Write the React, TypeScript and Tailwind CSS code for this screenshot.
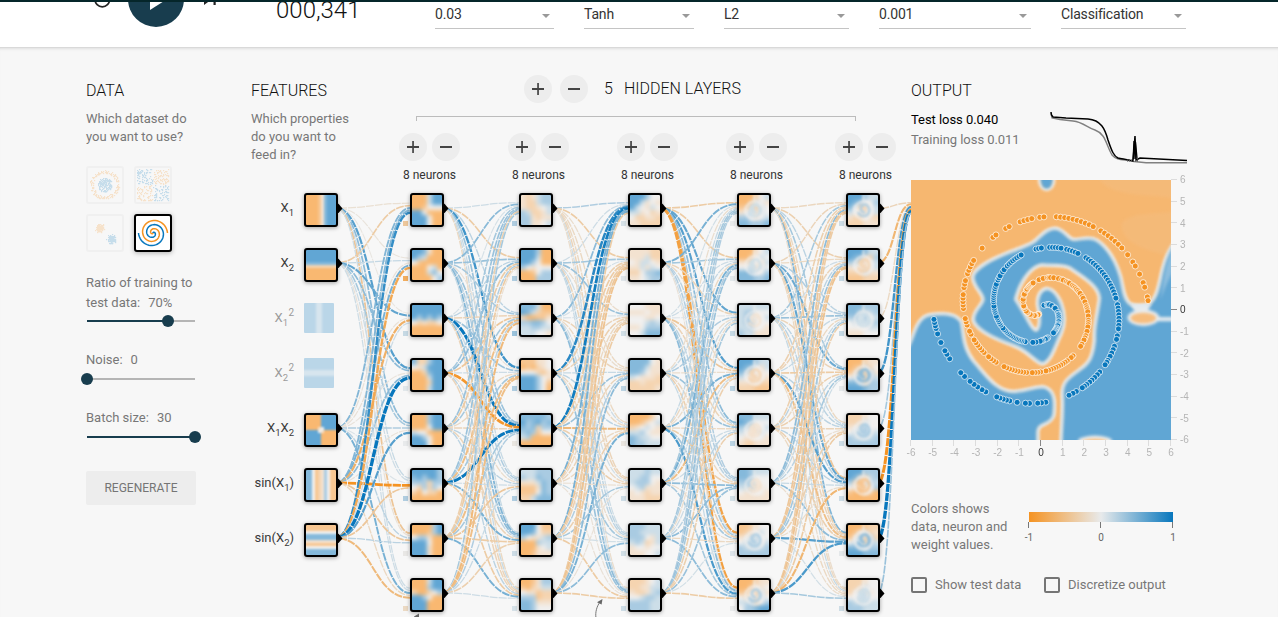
import React from "react";

type RGB = [number, number, number];

const mix = (a: RGB, b: RGB, t: number) =>
  `rgb(${a.map((v, i) => Math.round(v + (b[i] - v) * t)).join(",")})`;

const weightColor = (w: number) => {
  const c = Math.max(-1, Math.min(1, w));
  return c < 0 ? mix([232, 234, 235], [245, 147, 34], -c) : mix([232, 234, 235], [8, 119, 189], c);
};

const cellColor = (d: number) =>
  d < 4
    ? mix([249, 184, 113], [241, 240, 239], d / 4)
    : mix([241, 240, 239], [97, 166, 212], (d - 4) / 4);

const CELL_TOP = 193;
const ROW = 55;
const LAYER_X = [410, 519, 628, 737, 846];

const FEATURES = [
  { name: "X", sub: "1", sup: "", pre: "", post: "", row: 0, active: true, grid: Array(10).fill("0000137888") },
  { name: "X", sub: "2", sup: "", pre: "", post: "", row: 1, active: true, grid: ["8", "8", "8", "8", "7", "2", "0", "0", "0", "0"].map((c) => c.repeat(10)) },
  { name: "X", sub: "1", sup: "2", pre: "", post: "", row: 2, active: false, grid: Array(10).fill("8888668888") },
  { name: "X", sub: "2", sup: "2", pre: "", post: "", row: 3, active: false, grid: ["8", "8", "8", "8", "6", "6", "8", "8", "8", "8"].map((c) => c.repeat(10)) },
  { name: "X", sub: "1", sup: "", pre: "", post: "X2", row: 4, active: true, grid: ["0000088888", "0000088888", "0000088888", "0000088888", "0000348888", "8888430000", "8888800000", "8888800000", "8888800000", "8888800000"] },
  { name: "X", sub: "1", sup: "", pre: "sin(", post: ")", row: 5, active: true, grid: Array(10).fill("7741236411") },
  { name: "X", sub: "2", sup: "", pre: "sin(", post: ")", row: 6, active: true, grid: ["1", "1", "4", "7", "7", "3", "1", "4", "7", "7"].map((c) => c.repeat(10)) },
];

const NEURONS: string[][] = [
  [
    "000588 000588 001444 884000 888400 888400",
    "887300 865000 410000 000450 000574 000046",
    "888888 888888 868686 423224 000000 000000",
    "722688 435888 002788 000588 000288 000588",
    "000688 000688 000488 544000 886400 888400",
    "888886 786886 666266 426264 204220 000000",
    "000068 000168 466300 888400 888300 888300",
    "000588 000688 200246 886400 888000 888000",
  ],
  [
    "323566 322566 322345 652235 663233 663345",
    "888600 888500 886400 643444 001466 000666",
    "777500 875211 200113 667764 556655 555443",
    "111334 010234 444213 888643 888641 888640",
    "777776 867867 767266 676144 560000 000000",
    "555666 655766 333576 111376 111476 225777",
    "888411 887422 643356 000655 000345 001333",
    "001366 102355 433122 666122 776333 776444",
  ],
  [
    "888644 885343 854354 553423 422332 332222",
    "333322 333522 435543 335354 224667 334566",
    "444333 333433 444334 444565 334666 445777",
    "777743 777533 776433 543332 223222 222223",
    "000024 001345 234543 556433 765544 766555",
    "555655 556644 566643 456333 343233 333222",
    "666555 665555 666435 565235 344344 333445",
    "222345 223355 322356 445665 666655 666655",
  ],
  [
    "000245 002543 125254 345354 664345 776667",
    "000345 002454 335435 445354 776446 777667",
    "555555 566444 564345 566444 556443 655333",
    "888655 876435 752434 543243 332422 222111",
    "777555 876444 653345 543354 433443 322333",
    "776555 776444 665344 556334 433443 333333",
    "112344 123454 345544 455545 655556 666666",
    "000233 002434 124253 434354 556246 466788",
  ],
  [
    "888655 876446 742245 544345 322432 222333",
    "888755 876326 652345 344245 222533 111222",
    "777666 775556 664645 455556 444455 333444",
    "000233 012524 137263 456265 775266 888766",
    "222344 223544 345644 455655 655556 666666",
    "888666 873256 620365 432246 100320 000000",
    "000122 014523 146262 455265 775466 888777",
    "222344 223544 245534 445544 655555 666555",
  ],
];

/* Tint of the faint swirl in the deeper layers, by layer and unit. */
const SWIRLS: Record<number, number[]> = {
  3: [5, 5, 3, 2, 3, 3, 6, 6],
  4: [6, 2, 5, 7, 6, 1, 7, 5],
};

const BIASES = [
  [-0.4, -0.7, 0.15, 0.03, 0, 0.25, -0.03, -0.2],
  [0.25, 0.25, 0.35, 0.25, -0.05, 0.25, 0.12, 0.08],
  [0.08, 0.04, 0.1, 0.2, -0.06, 0.12, 0.1, 0.12],
  [0, 0.03, 0.15, 0.2, 0.2, 0.1, 0.05, 0],
  [0.12, 0.15, 0.15, 0.02, 0.12, 0.12, 0.02, 0.12],
];

const SOURCE_ROWS = [0, 1, 4, 5, 6];

/* One row per source unit, one column per target unit. */
const WEIGHTS: number[][][] = [
  [
    [-0.12, -0.08, -0.05, 0.65, 0.4, 0.15, -0.42, 0.12],
    [-0.35, 0.16, 0.6, 0.4, 0.3, 0.12, -0.1, 0.12],
    [0.45, -0.1, -0.1, -0.08, 0.25, 0.06, 0.2, 0.5],
    [0.45, 0.5, -0.65, 0.4, -0.1, -1.0, -0.4, -0.2],
    [0.8, -0.75, 0.12, 1.3, 0.65, -0.4, 0.2, -0.55],
  ],
  [
    [0.12, -0.35, 0.2, 0.75, 0.35, 0.15, 0.15, -0.2],
    [0.42, 0.35, 0.3, -0.1, 0.35, 0.25, 0.45, 0.15],
    [0.08, 0.2, -0.25, 0.35, 1.15, 0.15, 0.4, -0.25],
    [0.3, 0.4, -0.4, 0.12, -0.95, -0.15, 0.2, -0.25],
    [0.35, -0.35, 0.3, -0.2, -0.25, 0.2, -0.25, 0.2],
    [0.35, 0.25, -0.5, 0.3, 1.1, 0.12, 0.5, -0.35],
    [-0.3, -0.35, 0.2, -0.5, 0.3, -0.4, -0.35, 0.5],
    [0.3, -0.12, -0.55, -0.5, 0.25, 0.15, -0.3, 0.12],
  ],
  [
    [0.25, -0.35, -0.15, -0.2, -0.2, -0.25, 0.12, -0.15],
    [0.12, 0.3, 0.35, -0.15, 0.12, -0.25, 0.2, 0.15],
    [0.4, 0.1, 0.08, -0.25, -0.2, 0.1, 0.2, 0.4],
    [0.85, -0.3, -0.25, 0.15, 0.2, -0.2, -0.15, 0.35],
    [0.95, -0.35, -0.3, 0.35, -0.55, -0.3, 0.3, -0.1],
    [0.5, -0.35, -0.2, -0.25, -0.2, -0.12, 0.15, -0.1],
    [0.5, -0.4, -0.3, 0.25, -0.3, 0.3, 0.1, -0.35],
    [-0.35, -0.45, -0.35, 0.4, 0.5, -0.1, 0.4, -0.35],
  ],
  [
    [-0.35, -0.35, 0.6, 0.65, 0.4, 0.25, -0.8, -0.85],
    [0.5, 0.3, -0.25, -0.2, 0.2, 0.25, 0.12, -0.1],
    [0.1, 0.12, 0.05, -0.4, -0.25, 0.2, 0.3, 0.4],
    [-0.15, 0.15, 0.25, -0.15, 0.35, -0.2, -0.3, 0.15],
    [0.15, -0.2, -0.15, 0.5, -0.2, -0.3, 0.3, 0.7],
    [0.3, 0.5, 0.15, -0.5, 0.12, 0.4, -0.15, 0.3],
    [0.3, 0.25, -0.15, 0.12, 0.2, 0.4, -0.2, 0.4],
    [0.25, 0.35, 0.3, -0.3, -0.3, 0.35, 0.1, -0.35],
  ],
  [
    [-0.22, -0.3, 0.2, 0.3, -0.2, -0.4, 0.45, -0.15],
    [-0.25, -0.2, 0.25, 0.55, 0.15, 0.6, -0.3, -0.2],
    [0.3, 0.12, 0.35, -0.25, 0.2, 0.2, -0.25, 0.15],
    [-0.3, -0.25, 0.15, -0.35, 0.2, 0.65, -0.5, -0.15],
    [-0.3, 0.2, -0.2, -0.3, -0.25, 0.2, -0.3, -0.2],
    [0.4, 0.35, 0.15, 0.2, -0.12, 0.15, 0.4, -0.15],
    [-0.4, -0.4, 0.3, 0.3, -0.3, -0.15, 0.65, 0.1],
    [-0.35, -0.45, -0.3, 0.12, -0.35, -0.6, 0.7, 0.3],
  ],
  [[-0.25], [-0.6], [-0.2], [0.75], [0.3], [-1.1], [1.3], [0.35]],
];

const rowY = (row: number) => CELL_TOP + 15 + ROW * row;

function Links() {
  const out: React.ReactElement[] = [];
  WEIGHTS.forEach((layer, l) => {
    const n = layer.length;
    const sx = (l === 0 ? 304 : LAYER_X[l - 1]) + 32;
    const tx = l === 5 ? 911 : LAYER_X[l];
    layer.forEach((targets, s) => {
      const sy = rowY(l === 0 ? SOURCE_ROWS[s] : s);
      targets.forEach((w, t) => {
        const ty = rowY(t) + ((s - (n - 1) / 2) / n) * 12;
        const mx = (sx + tx) / 2;
        out.push(
          <path
            key={`${l}-${s}-${t}`}
            d={`M${sx},${sy}C${mx},${sy} ${mx},${ty} ${tx},${ty}`}
            stroke={weightColor(w)}
            strokeWidth={1 + Math.abs(w) * 1.8}
            strokeDasharray="8 1"
            strokeDashoffset={-3}
          />,
        );
      });
    });
  });
  return <g fill="none">{out}</g>;
}

function Heat({ rows, swirl }: { rows: string[]; swirl?: number }) {
  const n = rows.length;
  const c = 30 / n;
  return (
    <g clipPath="url(#tile)">
      <g filter={n > 6 ? "url(#fine)" : "url(#soft)"}>
        {rows.map((r, y) =>
          r.split("").map((d, x) => {
            const x0 = x === 0 ? -8 : x * c;
            const y0 = y === 0 ? -8 : y * c;
            const x1 = x === n - 1 ? 38 : (x + 1) * c;
            const y1 = y === n - 1 ? 38 : (y + 1) * c;
            return <rect key={`${x}-${y}`} x={x0} y={y0} width={x1 - x0 + 0.2} height={y1 - y0 + 0.2} fill={cellColor(Number(d))} />;
          }),
        )}
      </g>
      {swirl !== undefined && (
        <g filter="url(#fine)" fill="none">
          <path d="M15.500,0V6" stroke="#f1f0ef" strokeWidth="2.500" opacity="0.6" />
          <circle cx="15.500" cy="15.500" r="9" stroke="#f1f0ef" strokeWidth="2.500" opacity="0.6" />
          <path d="M17,17C13,18 11,12 15,10C20,8 23,15 20,19C18,22 12,22 10,17" stroke={cellColor(swirl)} strokeWidth="2.500" opacity="0.85" />
        </g>
      )}
    </g>
  );
}

function Tile({ x, y, rows, swirl }: { x: number; y: number; rows: string[]; swirl?: number }) {
  return (
    <g transform={`translate(${x},${y})`}>
      <rect x="0" y="1" width="34" height="34" rx="3" fill="#000" opacity="0.35" filter="url(#shade)" />
      <rect width="34" height="34" rx="3" fill="#000" />
      <g transform="translate(2,2)">
        <Heat rows={rows} swirl={swirl} />
      </g>
      <path d="M33.5,10.8h1l4,4.6-4,4.6h-1z" fill="#000" />
    </g>
  );
}

function FeatureLabel({ f }: { f: (typeof FEATURES)[number] }) {
  const y = rowY(f.row) + 3.5;
  return (
    <text x={f.sup ? 288 : 294} y={y} textAnchor="end" fontSize="13" fill={f.active ? "#3a3a3a" : "#9b9b9b"}>
      {f.pre}X
      <tspan fontSize="9.5" dy="4">{f.sub}</tspan>
      {f.post === "X2" && (
        <>
          <tspan dy="-4">X</tspan>
          <tspan fontSize="9.5" dy="4">2</tspan>
        </>
      )}
      {f.post === ")" && <tspan dy="-4">)</tspan>}
    </text>
  );
}

function NetworkDiagram() {
  return (
    <svg className="absolute left-0 top-[185px] h-[432px] w-[660px] font-[Roboto,sans-serif]" viewBox="251 185 660 432">
      <defs>
        <clipPath id="tile">
          <rect width="30" height="30" rx="1" />
        </clipPath>
        <filter id="soft" x="-20%" y="-20%" width="140%" height="140%" colorInterpolationFilters="sRGB">
          <feGaussianBlur stdDeviation="2" />
        </filter>
        <filter id="fine" x="-20%" y="-20%" width="140%" height="140%" colorInterpolationFilters="sRGB">
          <feGaussianBlur stdDeviation="0.9" />
        </filter>
        <filter id="shade" x="-30%" y="-30%" width="160%" height="160%">
          <feGaussianBlur stdDeviation="2" />
        </filter>
      </defs>
      <Links />
      {FEATURES.map((f) => (
        <g key={f.row}>
          <FeatureLabel f={f} />
          {f.sup && <text x="294" y={rowY(f.row) - 2} textAnchor="end" fontSize="10" fill="#9b9b9b">{f.sup}</text>}
          {f.active ? (
            <Tile x={304} y={CELL_TOP + ROW * f.row} rows={f.grid} />
          ) : (
            <g transform={`translate(304,${CELL_TOP + ROW * f.row})`} opacity="0.4">
              <Heat rows={f.grid} />
            </g>
          )}
        </g>
      ))}
      {NEURONS.map((layer, l) =>
        layer.map((g, i) => (
          <g key={`${l}-${i}`}>
            <rect x={LAYER_X[l] - 7} y={CELL_TOP + ROW * i + 28} width="5" height="5" fill={weightColor(BIASES[l][i])} />
            <Tile x={LAYER_X[l]} y={CELL_TOP + ROW * i} rows={g.split(" ")} swirl={SWIRLS[l]?.[i]} />
          </g>
        )),
      )}
      <path d="M596,618C595,612 597,606 600,602" fill="none" stroke="#777" />
      <path d="M602.5,599l-5.5,3.2 4.6,2.2z" fill="#666" />
      <path d="M419,613.5l-5,3 1,1.5h4z" fill="#666" />
    </svg>
  );
}

function RoundButton({ kind }: { kind: "+" | "-" }) {
  return (
    <button className="flex size-7 items-center justify-center rounded-full bg-[#ededed]">
      <svg className="size-3" viewBox="0 0 12 12" fill="#444">
        <rect x="0" y="5" width="12" height="2" />
        {kind === "+" && <rect x="5.2" y="0" width="1.7" height="12" />}
      </svg>
    </button>
  );
}

function Select({ value, className }: { value: string; className: string }) {
  return (
    <div className={`flex h-[29px] items-center justify-between border-b border-[#c4c4c4] pr-[4px] text-[14px] leading-[28px] tracking-[-0.18px] text-[#333] ${className}`}>
      <span>{value}</span>
      <span className="mt-[3px] size-0 border-x-[4px] border-t-[4px] border-x-transparent border-t-[#999]" />
    </div>
  );
}

function Header() {
  return (
    <header className="relative z-10 h-[47px] overflow-hidden border-t-2 border-[#05262a] bg-white">
      <div className="-mt-[2px] flex h-[29px]">
        <div className="flex w-[276px] shrink-0">
          <svg className="h-[29px] w-[276px]" viewBox="0 0 276 29">
            <path d="M95,-0.500a7.3,7.3 0 0 0 14.6,0" fill="none" stroke="#222" strokeWidth="1.7" />
            <circle cx="156" cy="-1" r="28" fill="#183d4e" />
            <path d="M150,-11v21l16.500,-10.500z" fill="#fff" />
            <path d="M204,-6v11l7.500,-5.500z M213.500,-6h2.200v11h-2.200z" fill="#222" />
          </svg>
        </div>
        <div className="-mt-[4px] w-[159px] shrink-0 text-[24px] font-light leading-[29px] text-[#111]">000,341</div>
        <Select value="0.03" className="w-[119px]" />
        <Select value="Tanh" className="ml-[30px] w-[110px]" />
        <Select value="L2" className="ml-[30px] w-[125px]" />
        <Select value="0.001" className="ml-[30px] w-[152px]" />
        <Select value="Classification" className="ml-[30px] w-[125px]" />
      </div>
    </header>
  );
}

const rand = (seed: number) => {
  const v = Math.sin(seed * 127.1 + 3.7) * 43758.5453;
  return v - Math.floor(v);
};

function scatter(kind: "circle" | "xor" | "gauss") {
  const pts: { x: number; y: number; blue: boolean }[] = [];
  for (let i = 0; i < 320; i++) {
    const a = rand(i) * Math.PI * 2;
    const b = rand(i + 500);
    const c = rand(i + 900);
    if (kind === "circle") {
      const blue = i % 2 === 0;
      const r = blue ? 7 * Math.sqrt(b) : 11.5 + 3 * b;
      pts.push({ x: 17 + r * Math.cos(a), y: 17 + r * Math.sin(a), blue });
    } else if (kind === "xor") {
      const x = b * 30 - 15;
      const y = c * 30 - 15;
      pts.push({ x: 17 + x + Math.sign(x) * 0.8, y: 17 + y + Math.sign(y) * 0.8, blue: x * y > 0 });
    } else {
      const blue = i % 2 === 0;
      const r = 5.5 * b * Math.sqrt(c);
      pts.push({ x: (blue ? 23.5 : 12) + r * Math.cos(a), y: (blue ? 23.5 : 12) + r * Math.sin(a), blue });
    }
  }
  return pts;
}

function spiral(dir: number) {
  let d = "";
  for (let i = 0; i <= 80; i++) {
    const u = i / 80;
    const t = 3.5 * Math.PI * u;
    d += `${i ? "L" : "M"}${(17 + dir * 14.5 * u * Math.sin(t)).toFixed(2)},${(17 - dir * 14.5 * u * Math.cos(t)).toFixed(2)}`;
  }
  return d;
}

function Dataset({ kind }: { kind: "circle" | "xor" | "gauss" | "spiral" }) {
  if (kind === "spiral") {
    return (
      <div className="size-[38px] rounded-[3px] border-2 border-black bg-white shadow-[0_1px_5px_rgba(0,0,0,0.3)]">
        <svg className="size-[34px]" viewBox="0 0 34 34" fill="none" strokeWidth="1.5">
          <path d={spiral(1)} stroke="#0877bd" />
          <path d={spiral(-1)} stroke="#f59322" />
        </svg>
      </div>
    );
  }
  return (
    <div className="size-[38px] rounded-[3px] border-2 border-[#f0f0f0]">
      <svg className="size-[34px] opacity-20" viewBox="0 0 34 34">
        {scatter(kind).map((p, i) => (
          <rect key={i} x={Math.round(p.x - 0.5)} y={Math.round(p.y - 0.5)} width="1.2" height="1.2" fill={p.blue ? "#0877bd" : "#f59322"} />
        ))}
      </svg>
    </div>
  );
}

function Slider({ value }: { value: number }) {
  return (
    <svg className="-ml-[6px] block h-3 w-[122px]" viewBox="0 0 122 12">
      <rect x="7" y="5" width="108" height="2" fill="#b5b5b5" />
      <rect x="7" y="5" width={108 * value} height="2" fill="#183d4e" />
      <circle cx={7 + 108 * value} cy="6" r="6" fill="#183d4e" />
    </svg>
  );
}

function DataColumn() {
  return (
    <section className="ml-[86px] w-[110px] shrink-0 pt-[33px] text-[13px] text-[#777]">
      <h4 className="text-[16px] font-light leading-[20px] text-[#111]">DATA</h4>
      <p className="mt-[9px] whitespace-nowrap leading-[18px]">Which dataset do<br />you want to use?</p>
      <div className="mt-[20px] grid w-[86px] grid-cols-2 gap-[10px]">
        <Dataset kind="circle" />
        <Dataset kind="xor" />
        <Dataset kind="gauss" />
        <Dataset kind="spiral" />
      </div>
      <div className="mt-[21px] whitespace-nowrap leading-[20px]">Ratio of training to<br />test data:<span className="ml-2">70%</span></div>
      <div className="mt-[2px]"><Slider value={0.75} /></div>
      <div className="mt-[23px] leading-[20px]">Noise:<span className="ml-2">0</span></div>
      <div className="mt-[3px]"><Slider value={0} /></div>
      <div className="mt-[23px] leading-[20px]">Batch size:<span className="ml-2">30</span></div>
      <div className="mt-[3px]"><Slider value={1} /></div>
      <button className="mt-[28px] h-[34px] w-[110px] rounded-[2px] bg-[#ededed] text-[12px] text-[#757575]">REGENERATE</button>
    </section>
  );
}

function NetworkColumn() {
  return (
    <section className="relative ml-[55px] -mt-[48px] h-[617px] w-[660px] shrink-0">
      <div className="flex pt-[75px]">
        <div className="w-[149px] shrink-0 pt-[6px]">
          <h4 className="text-[16px] font-light leading-[20px] text-[#111]">FEATURES</h4>
          <p className="mt-[9px] text-[13px] leading-[18px] text-[#777]">Which properties<br />do you want to<br />feed in?</p>
        </div>
        <div className="flex w-[496px] shrink-0 flex-col">
          <div className="ml-[124px] flex h-7 items-center gap-2">
            <RoundButton kind="+" />
            <RoundButton kind="-" />
            <span className="ml-2 text-[16px] font-light text-[#111]">5</span>
            <span className="ml-[3px] text-[16px] font-light text-[#111]">HIDDEN LAYERS</span>
          </div>
          <div className="ml-[16px] mt-[13px] h-[5px] w-[440px] border border-b-0 border-[#bcbcbc]" />
          <div className="-ml-[1px] mt-[12px] flex">
            {LAYER_X.map((x) => (
              <div key={x} className="w-[109px] shrink-0">
                <div className="flex gap-[5px]">
                  <RoundButton kind="+" />
                  <RoundButton kind="-" />
                </div>
                <div className="mt-[5px] w-[61px] whitespace-nowrap text-center text-[12px] leading-[18px] text-[#333]">8 neurons</div>
              </div>
            ))}
          </div>
        </div>
      </div>
      <NetworkDiagram />
    </section>
  );
}

const inside = (v: number, gaps: number[][]) => gaps.some(([a, b]) => v > a && v < b);

const ORANGE_GAPS = [[314, 324], [393.5, 400], [488.8, 496], [498.8, 506], [511.5, 516], [519.5, 526.3], [534.7, 538.7], [542, 549], [572.5, 577]];
const BLUE_GAPS = [[342.5, 351.8], [361.5, 366.8]];
const ORANGE_END = [592.5, 597.5, 602.4, 605, 610, 615, 617.6, 623, 625];
const BLUE_END = [
  487, 488.5, 490.5, 496.6, 499, 501.5, 504, 506, 508.5, 510.3, 512, 516.6, 519, 521.8, 537, 539.7, 542, 547, 549.5,
  554.5, 559, 561, 563, 565, 567, 574, 576.5, 579.5, 582, 584.8, 589, 592, 601.9, 604.8, 607, 612, 617, 620, 621.5, 623.3, 625,
];

const dropRate = (t: number) => (t < 100 ? 0.7 : t < 200 ? 0.5 : t < 300 ? 0.3 : t < 480 ? 0.18 : 0);

function Dots() {
  const dots: { x: number; y: number; c: string; k: string }[] = [];
  const add = (t: number, dir: number) => {
    const r = (5 * t) / 630;
    const a = (t * Math.PI) / 180;
    dots.push({
      x: 130 + dir * r * Math.sin(a) * 21.667,
      y: 130 - dir * r * Math.cos(a) * 21.667,
      c: dir > 0 ? "#0877bd" : "#f59322",
      k: `${dir}-${t}`,
    });
  };
  for (let i = 8; i < 250; i++) {
    const t = i * 2.52;
    if (t < 591 && rand(i) > dropRate(t) && !inside(t, ORANGE_GAPS)) add(t, -1);
    if (t < 486 && rand(i + 300) > dropRate(t) && !inside(t, BLUE_GAPS)) add(t, 1);
  }
  ORANGE_END.forEach((t) => add(t, -1));
  BLUE_END.forEach((t) => add(t, 1));
  return (
    <g stroke="#fff" strokeOpacity="0.7" strokeWidth="1">
      {dots.map((d) => (
        <circle key={d.k} cx={d.x} cy={d.y} r="3" fill={d.c} />
      ))}
    </g>
  );
}

const MAIN_REGION =
  "M840,200C805,240 795,270 785,315C775,365 768,385 750,402C730,412 705,412 688,402C668,385 668,350 660,320C648,280 625,235 590,212C565,198 540,212 520,210C505,208 490,178 465,176C435,178 420,205 400,218C370,235 330,245 300,260C265,275 222,300 220,322C222,350 250,370 251,388C250,405 218,425 222,452C235,485 300,510 340,525C385,540 405,575 427,580C452,575 465,525 482,490C495,460 493,430 482,400C470,372 455,358 440,357C418,362 414,385 414,402C420,430 425,470 410,482C395,485 380,440 345,388C355,345 385,290 425,283C455,287 480,280 510,292C545,318 598,345 600,385C595,430 582,470 585,510C580,560 570,580 540,600C515,620 490,630 488,670C492,720 485,770 484,840L840,840Z";
const LEFT_REGION =
  "M10,545C45,530 38,445 90,436C125,430 165,430 182,455C190,490 185,530 220,575C260,620 290,668 345,666C385,662 405,652 430,652C470,662 462,710 460,735C450,768 413,755 412,785L412,840L10,840Z";

function OutputPlot() {
  const ticks = Array.from({ length: 13 }, (_, i) => i - 6);
  return (
    <svg className="absolute left-0 top-[170px] h-[295px] w-[290px] font-['Liberation_Sans',sans-serif]" viewBox="-10 -10 290 295">
      <defs>
        <clipPath id="plot"><rect width="260" height="260" /></clipPath>
        <filter id="edge" x="-5%" y="-5%" width="110%" height="110%" colorInterpolationFilters="sRGB"><feGaussianBlur stdDeviation="5.5" /></filter>
        <filter id="core" x="-5%" y="-5%" width="110%" height="110%" colorInterpolationFilters="sRGB"><feGaussianBlur stdDeviation="4" /></filter>
      </defs>
      <g clipPath="url(#plot)">
        <rect width="260" height="260" fill="#f6b770" />
        <g transform="scale(0.33333) translate(-33,-30)">
          <path d="M600,30C640,90 800,70 840,90V20H600ZM665,160C700,110 840,150 840,100V260C750,250 660,220 665,160Z" fill="#f3bd81" opacity="0.5" filter="url(#core)" />
          <g stroke="#f4f2ef" strokeWidth="12" fill="none" filter="url(#edge)">
            <path d={MAIN_REGION} />
            <path d={LEFT_REGION} />
            <ellipse cx="440" cy="30" rx="20" ry="27" />
          </g>
          <g fill="#60a6d4" filter="url(#core)">
            <path d={MAIN_REGION} />
            <path d={LEFT_REGION} />
            <ellipse cx="440" cy="30" rx="18" ry="26" />
          </g>
          <g fill="none" stroke="#f4f2ef" strokeWidth="6" opacity="0.75" filter="url(#core)">
            <path d={MAIN_REGION} />
            <path d={LEFT_REGION} />
          </g>
          <g filter="url(#edge)">
            <path d="M690,402H755L740,425H705ZM760,441H830V454H760Z" fill="#e4eaee" />
            <path d="M822,225C795,280 790,330 782,390C795,350 810,320 822,300Z" fill="#9fc8e2" opacity="0.7" />
            <ellipse cx="730" cy="443" rx="48" ry="25" fill="#e9ecee" />
            <ellipse cx="585" cy="814" rx="52" ry="17" fill="#f1efec" />
          </g>
          <g fill="#f6bd7e" filter="url(#core)">
            <ellipse cx="730" cy="444" rx="38" ry="16" />
            <ellipse cx="585" cy="816" rx="38" ry="10" />
          </g>
        </g>
        <Dots />
      </g>
      {ticks.map((v) => {
        const p = 130 + v * 21.667;
        const fill = v === 0 ? "#333" : "#b5b5b5";
        const line = v === 0 ? "#888" : "#dcdcdc";
        return (
          <g key={v} fontSize="10" fill={fill}>
            <path d={`M${Math.round(p) - 0.5},260v6M260,${Math.round(260 - p) - 0.5}h6`} stroke={line} />
            <text x={p} y="276" textAnchor="middle">{v}</text>
            <text x="269" y={260 - p + 3.3}>{v}</text>
          </g>
        );
      })}
    </svg>
  );
}

function LossChart() {
  return (
    <svg className="absolute left-[149px] top-[108px] h-[60px] w-[140px]" viewBox="1050 108 140 60" fill="none">
      <path d="M1051,113L1052,118L1060,119.5L1073,121C1083,122 1088,128 1095,130C1106,134 1106,145 1112,155C1117,161 1124,159 1134,161.5L1146,162.7H1187" stroke="#808080" strokeWidth="1.4" />
      <path d="M1051,112L1051.5,115L1053,117L1066,118L1088,119C1101,120 1105,129 1108,140C1112,152 1114,156 1118,158C1123,159 1130,160 1133,161L1135,136L1136,160L1140,158L1187,160.5" stroke="#000" strokeWidth="1.5" />
      <path d="M1133,161L1134,141L1135,159L1135.5,142L1137,158" stroke="#000" strokeWidth="1.3" />
      <path d="M1127,160.5h12" stroke="#555" strokeWidth="2" strokeDasharray="1 1" />
    </svg>
  );
}

function Check({ label, className }: { label: string; className: string }) {
  return (
    <label className={`flex items-center gap-2 whitespace-nowrap ${className}`}>
      <span className="size-4 rounded-[2px] border-2 border-[#757575]" />
      {label}
    </label>
  );
}

function OutputColumn() {
  return (
    <section className="relative -mt-[48px] h-[617px] w-[290px] shrink-0 pt-[81px] text-[13px] text-[#777]">
      <h4 className="text-[16px] font-light leading-[20px] text-[#111]">OUTPUT</h4>
      <div className="mt-[9px] leading-[20px] tracking-[-0.05px]">
        <div className="text-black">Test loss 0.040</div>
        <div>Training loss 0.011</div>
      </div>
      <div className="absolute left-[-10px] top-0"><LossChart /><OutputPlot /></div>
      <div className="mt-[350px] flex">
        <p className="w-[112px] whitespace-nowrap leading-[18px]">Colors shows<br />data, neuron and<br />weight values.</p>
        <svg className="mt-[12px] h-[34px] w-[160px] font-[Roboto,sans-serif]" viewBox="1023 512 160 34">
          <defs>
            <linearGradient id="scale">
              <stop offset="0" stopColor="#f59322" />
              <stop offset="0.5" stopColor="#e8eaeb" />
              <stop offset="1" stopColor="#0877bd" />
            </linearGradient>
          </defs>
          <rect x="1029" y="512" width="144" height="10" fill="url(#scale)" />
          <path d="M1028.5,522v6M1100.5,522v6M1172.5,522v6" stroke="#777" />
          <g fontSize="10" fill="#666" textAnchor="middle">
            <text x="1029" y="541">-1</text>
            <text x="1101" y="541">0</text>
            <text x="1173" y="541">1</text>
          </g>
        </svg>
      </div>
      <div className="mt-[21px] flex">
        <Check label="Show test data" className="w-[133px]" />
        <Check label="Discretize output" className="" />
      </div>
    </section>
  );
}

export default function App() {
  return (
    <div className="h-[617px] w-[1278px] overflow-hidden bg-[#f7f7f7] font-[Roboto,sans-serif]">
      <Header />
      <main className="flex border-t border-[#d9d9d9] shadow-[inset_0_3px_3px_-2px_rgba(0,0,0,0.1)]">
        <DataColumn />
        <NetworkColumn />
        <OutputColumn />
      </main>
    </div>
  );
}
